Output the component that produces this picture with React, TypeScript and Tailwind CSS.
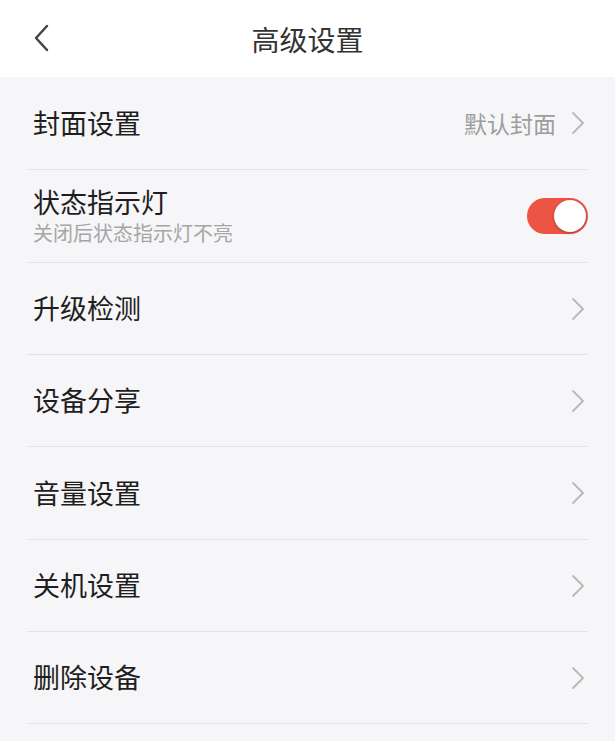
import React from 'react';

const Chevron = () => (
  <svg width="14" height="24" viewBox="0 0 14 24" fill="none" className="shrink-0">
    <path d="M2 2l10 10-10 10" stroke="#b8b8b8" strokeWidth="1.8" strokeLinecap="round" strokeLinejoin="round" />
  </svg>
);

const Row: React.FC<{ title: string; value?: string; tall?: boolean }> = ({ title, value, tall }) => (
  <div
    className={`${tall ? 'h-[93px]' : 'h-[92px]'} flex items-center justify-between border-b border-[#e2e1e4] pl-[6px] pr-[3px]`}
  >
    <span className="text-[27px] text-[#1e1e1e]">{title}</span>
    <div className="flex items-center gap-[15px]">
      {value && <span className="text-[23px] text-[#9d9d9d]">{value}</span>}
      <Chevron />
    </div>
  </div>
);

const App: React.FC = () => {
  const items: { t: string; tall: boolean }[] = [
    { t: '升级检测', tall: false },
    { t: '设备分享', tall: false },
    { t: '音量设置', tall: true },
    { t: '关机设置', tall: false },
    { t: '删除设备', tall: false },
  ];
  return (
    <div
      className="w-[615px] h-[741px] bg-[#f6f5f7] overflow-hidden"
      style={{ fontFamily: '"Noto Sans CJK SC", "Noto Sans", sans-serif' }}
    >
      <div className="h-[77px] bg-white relative flex items-center justify-center">
        <svg width="16" height="28" viewBox="0 0 16 28" fill="none" className="absolute left-[33px] top-[24px]">
          <path d="M14 2L3 14l11 12" stroke="#444" strokeWidth="2.5" strokeLinecap="round" strokeLinejoin="round" />
        </svg>
        <span className="text-[28px] text-[#333]">高级设置</span>
      </div>
      <div className="mx-[27px]">
        <Row title="封面设置" value="默认封面" tall />
        <div className="h-[93px] flex items-center justify-between border-b border-[#e2e1e4] pl-[6px]">
          <div className="flex flex-col">
            <span className="text-[27px] text-[#1e1e1e] leading-[34px]">状态指示灯</span>
            <span className="text-[20px] text-[#a6a6a6] leading-[28px]">关闭后状态指示灯不亮</span>
          </div>
          <div className="w-[61px] h-[36px] rounded-full bg-[#ee5444] relative">
            <div className="absolute right-[2px] top-[2px] w-[32px] h-[32px] rounded-full bg-white shadow-[0_1px_3px_rgba(0,0,0,0.3)]" />
          </div>
        </div>
        {items.map((i) => (
          <Row key={i.t} title={i.t} tall={i.tall} />
        ))}
      </div>
    </div>
  );
};

export default App;
